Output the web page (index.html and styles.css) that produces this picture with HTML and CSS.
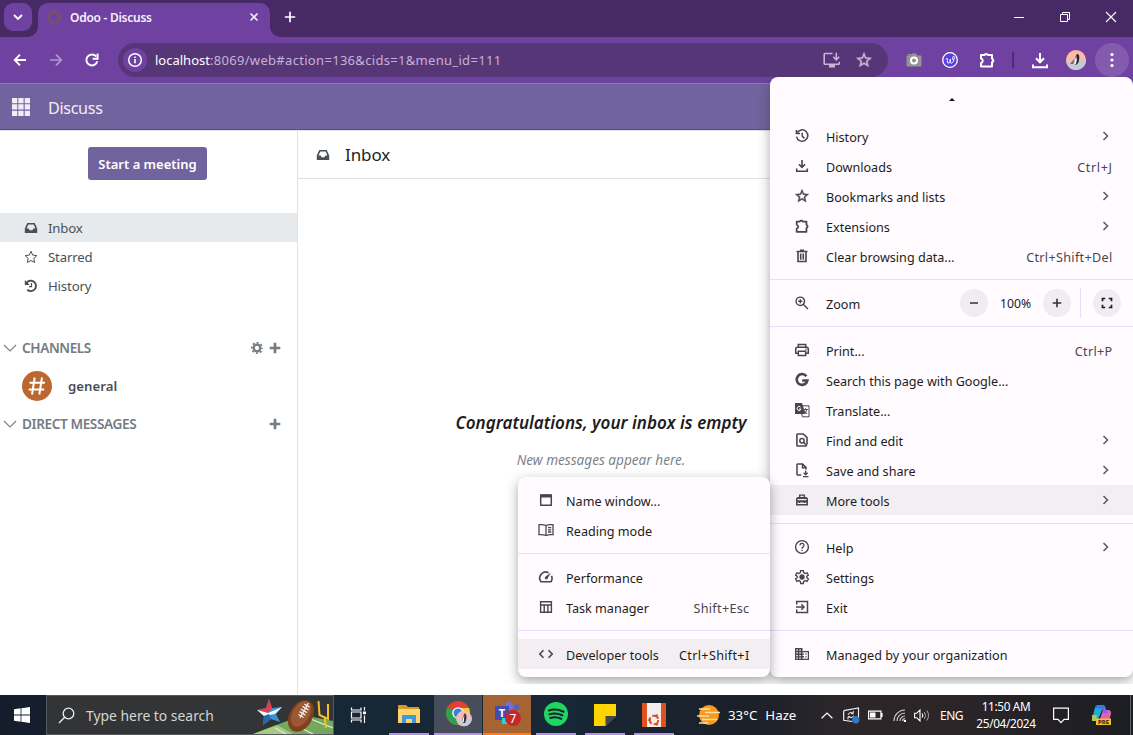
FILE: index.html
```html
<!DOCTYPE html>
<html lang="en">
<head>
<meta charset="utf-8">
<title>Odoo - Discuss</title>
<link rel="stylesheet" href="styles.css">
</head>
<body>
<svg class="defs" width="0" height="0">
  <symbol id="history" viewBox="0 0 16 16"><path d="M3 5A5.700 5.700 0 1 1 2.500 8.600M2.400 2v3.500h3.700M8.200 4.800v3.400l2.300 2.200" fill="none" stroke="currentColor" stroke-width="1.500"/></symbol>
  <symbol id="download" viewBox="0 0 16 16"><path d="M8 2v7.300M5 6.400l3 3 3-3M2.700 10.500v2.700h10.600v-2.700" fill="none" stroke="currentColor" stroke-width="1.600"/></symbol>
  <symbol id="star" viewBox="0 0 24 24"><path fill="currentColor" stroke="currentColor" stroke-width=".7" d="M22 9.240l-7.190-.620L12 2 9.190 8.630 2 9.240l5.460 4.730L5.820 21 12 17.270 18.180 21l-1.630-7.030L22 9.240zM12 15.400l-3.760 2.270 1-4.280-3.320-2.880 4.380-.380L12 6.100l1.710 4.040 4.380.380-3.320 2.880 1 4.280L12 15.400z"/></symbol>
  <symbol id="puzzle" viewBox="0 0 18 18"><path d="M3 4h3.400a2 1.800 0 0 1 3.600 0h4v3.700a1.900 1.900 0 0 1 0 3.600V15.500H3v-3.600a2.200 2.200 0 0 0 0-4.300z" fill="none" stroke="currentColor" stroke-width="2" stroke-linejoin="round"/></symbol>
  <symbol id="trash" viewBox="0 0 16 16"><path d="M2.500 3.500h11M6 2.300h4M4 4v9.500h8V4M6.700 5.500v6.300M9.300 5.500v6.300" fill="none" stroke="currentColor" stroke-width="1.600"/></symbol>
  <symbol id="zoomin" viewBox="0 0 16 16"><path d="M10.500 6.300a4.200 4.200 0 1 1-8.400 0 4.200 4.200 0 0 1 8.400 0zM9.400 9.400l4.600 4.600M6.300 4.300v4M4.300 6.300h4" fill="none" stroke="currentColor" stroke-width="1.400"/></symbol>
  <symbol id="print" viewBox="0 0 16 16"><path d="M4.300 5V2.500h7.400V5M4 11.300H1.700V7.200Q1.700 5.300 3.500 5.300h9Q14.300 5.300 14.300 7.200v4.100H12M4.300 9.200h7.400v4.300H4.300z" fill="none" stroke="currentColor" stroke-width="1.500"/><circle cx="12" cy="7.300" r=".8" fill="currentColor"/></symbol>
  <symbol id="google" viewBox="0 0 16 16"><path d="M12.400 4.200A5.400 5.400 0 1 0 13.400 8.500H8.200" fill="none" stroke="currentColor" stroke-width="2.600"/></symbol>
  <symbol id="translate" viewBox="0 0 16 16"><path d="M1 1h7l3.500 11H1z" fill="currentColor"/><path d="M7.500 3.800H15v11H8.500L7.700 12M9.300 7.500h4.500M11.500 6.300v1.200M12.800 7.500q-.6 2.700-2.600 4M10.500 9l2.700 3" fill="none" stroke="currentColor" stroke-width="1"/><path d="M6.600 5.200A2 2 0 1 0 7 7H5" fill="none" stroke="#fffbff" stroke-width="1"/></symbol>
  <symbol id="find" viewBox="0 0 16 16"><path d="M12.500 14H3.500Q2.900 14 2.900 13.300V2.700Q2.900 2 3.500 2H9.300L13 5.700V12.500" fill="none" stroke="currentColor" stroke-width="1.600"/><circle cx="8" cy="8.800" r="2.200" fill="none" stroke="currentColor" stroke-width="1.500"/><path d="M9.500 10.300l3.500 3.500" stroke="currentColor" stroke-width="1.500"/></symbol>
  <symbol id="save" viewBox="0 0 16 16"><path d="M7.300 13H3.600Q3 13 3 12.300V2.700Q3 2 3.600 2h5L12 5.400V7.500M8.500 2v3.700H12" fill="none" stroke="currentColor" stroke-width="1.500"/><path d="M11.700 8.500v4M9.700 10.700l2 2 2-2M9 14.700h5.500" fill="none" stroke="currentColor" stroke-width="1.300"/></symbol>
  <symbol id="toolbox" viewBox="0 0 16 16"><path fill="currentColor" fill-rule="evenodd" d="M5 5V2.500h6V5h1.500L14 6.500V13.500H2V6.500L3.500 5zM6.400 3.800V5h3.200V3.800zM3.500 7v1.200h9V7zM3.500 10.500v1.500h9v-1.500h-1.200v.5H10v-.5H6v.5H4.700v-.5z"/></symbol>
  <symbol id="help" viewBox="0 0 16 16"><circle cx="8" cy="8" r="6.400" fill="none" stroke="currentColor" stroke-width="1.400"/><path d="M6 6.400a2 2 0 1 1 3.200 1.500Q8 8.600 8 9.700M8 10.700v1.300" fill="none" stroke="currentColor" stroke-width="1.300"/></symbol>
  <symbol id="settings" viewBox="0 0 24 24"><path d="M10 2.500h4l.5 3 2.200 1.300 2.900-1.100 2 3.500-2.400 1.900v2l2.400 1.900-2 3.500-2.900-1.100-2.200 1.300-.5 3h-4l-.5-3-2.200-1.300-2.900 1.100-2-3.500 2.400-1.900v-2L2.400 9.200l2-3.500 2.900 1.100 2.200-1.300z" fill="none" stroke="currentColor" stroke-width="2"/><circle cx="12" cy="12" r="4" fill="currentColor"/></symbol>
  <symbol id="exit" viewBox="0 0 16 16"><path d="M2.700 5.500V2.500h10.800v11H2.700v-3M2 8h8M7.300 5.200 10 8l-2.700 2.800" fill="none" stroke="currentColor" stroke-width="1.500"/></symbol>
  <symbol id="building" viewBox="0 0 16 16"><path fill="currentColor" fill-rule="evenodd" d="M1 2h7.500v3H15v9H1zM2.300 3.500v1.300h1.500V3.500zM5.300 3.500v1.300h1.500V3.500zM2.300 6.200v1.300h1.500V6.200zM5.300 6.200v1.300h1.500V6.200zM2.300 8.900v1.300h1.500V8.900zM5.300 8.900v1.300h1.500V8.900zM2.300 11.500v1.300h1.500v-1.300zM5.300 11.500v1.300h1.500v-1.300zM8.500 6.300v1.200H10v1.300H8.500v1.300H10v1.300H8.500v1.400h5.300V6.300zM11.300 7.500h1.300v1.300h-1.300zM11.300 10.200h1.300v1.300h-1.300z"/></symbol>
  <symbol id="window" viewBox="0 0 16 16"><path d="M2.700 3h10.600v10.200H2.700z" fill="none" stroke="currentColor" stroke-width="1.500" stroke-linejoin="round"/><path d="M2.500 2.500h11v3h-11z" fill="currentColor"/></symbol>
  <symbol id="book" viewBox="0 0 16 16"><path d="M8 3.500Q5 2.200 1 2.700v10Q5 12.300 8 13.500 11 12.300 15 12.700v-10Q11 2.200 8 3.500zv10M10 5.700h3.200M10 7.800h3.200M10 10h3.200" fill="none" stroke="currentColor" stroke-width="1.300"/></symbol>
  <symbol id="speed" viewBox="0 0 16 16"><path d="M10.500 3.700A6 6 0 0 0 3 12.700H13a6 6 0 0 0 .5-5.800" fill="none" stroke="currentColor" stroke-width="1.600"/><path d="M13 3.500 9.300 10Q8 11 7 9.800 6.300 8.600 7.400 7.700z" fill="currentColor"/></symbol>
  <symbol id="table" viewBox="0 0 16 16"><path d="M2.600 2.700h10.800v10.600H2.600zM2.600 6h10.800M6.200 6v7.300M9.900 6v7.300" fill="none" stroke="currentColor" stroke-width="1.400"/></symbol>
  <symbol id="code" viewBox="0 0 16 16"><path d="M5.500 4.300 1.800 8l3.700 3.700M10.500 4.300 14.200 8l-3.700 3.700" fill="none" stroke="currentColor" stroke-width="1.600"/></symbol>
  <symbol id="inbox" viewBox="0 0 14 14"><path fill="currentColor" fill-rule="evenodd" d="M3.300 2h7.400L13.200 7.500V12H.8V7.500zM4.300 3.600 2.600 7.600H4.700L5.500 9.300h3L9.300 7.600h2.100L9.700 3.600z"/></symbol>
  <symbol id="chev" viewBox="0 0 8 10"><path d="M1.500 1 5.500 5l-4 4" fill="none" stroke="#5a575e" stroke-width="1.500"/></symbol>
  <symbol id="down" viewBox="0 0 14 8"><path d="M1 1l6 6 6-6" fill="none" stroke="#7b838b" stroke-width="1.200"/></symbol>
  <symbol id="plus" viewBox="0 0 12 12"><path d="M6 .7v10.600M.7 6h10.600" stroke="#737b83" stroke-width="2.700"/></symbol>
</svg>

<header class="tabstrip">
  <div class="tab-search"><svg width="12" height="8" viewBox="0 0 12 8"><path d="M2 2l4 4 4-4" fill="none" stroke="#fff" stroke-width="1.900"/></svg></div>
  <div class="tab">
    <span class="favicon"></span>
    <span class="tab-title">Odoo - Discuss</span>
    <svg width="10" height="10" viewBox="0 0 10 10"><path d="M1.500 1.500l7 7M8.500 1.500l-7 7" stroke="#f3eafa" stroke-width="1.600"/></svg>
  </div>
  <svg class="new-tab" width="12" height="12" viewBox="0 0 12 12"><path d="M6 .8v10.400M.8 6h10.400" stroke="#fff" stroke-width="1.700"/></svg>
  <div class="window-buttons">
    <svg width="10" height="12" viewBox="0 0 10 12"><path d="M0 6.500h10" stroke="#fff"/></svg>
    <svg width="12" height="12" viewBox="0 0 12 12"><path d="M1.500 3.500h7v7h-7zM3.500 3.500v-2h7v7h-2" fill="none" stroke="#fff"/></svg>
    <svg width="12" height="12" viewBox="0 0 12 12"><path d="M1 1l10 10M11 1 1 11" stroke="#fff" stroke-width="1.100"/></svg>
  </div>
</header>

<div class="toolbar">
  <div class="nav-buttons">
    <svg width="14" height="14" viewBox="0 0 14 14"><path d="M13 7H2M7 1.600 1.700 7 7 12.400" fill="none" stroke="#fff" stroke-width="1.900"/></svg>
    <svg class="dim" width="14" height="14" viewBox="0 0 14 14"><path d="M1 7H12M7 1.600 12.300 7 7 12.400" fill="none" stroke="#fff" stroke-width="1.700"/></svg>
    <svg width="14" height="14" viewBox="0 0 14 14"><path d="M12.300 8.200A5.500 5.500 0 1 1 11.200 3.500M12.600.6v5.200H7.700" fill="none" stroke="#fff" stroke-width="1.900"/></svg>
  </div>
  <div class="omnibox">
    <span class="info"><svg width="16" height="16" viewBox="0 0 16 16"><circle cx="8" cy="8" r="6.300" fill="none" stroke="#fff" stroke-width="1.500"/><path d="M8 7v4.200M8 4.500v1.600" stroke="#fff" stroke-width="1.600"/></svg></span>
    <span class="url"><b>localhost</b>:8069/web#action=136&amp;cids=1&amp;menu_id=111</span>
    <svg class="install" width="18" height="16" viewBox="0 0 18 16"><path d="M9.500 1.500H2Q1.200 1.500 1.200 2.300v9.200q0 .8.800.8H15.500q.8 0 .8-.8V9.800M13.300.8v6.500M10.300 4.800l3 3 3-3" fill="none" stroke="#c9b4d6" stroke-width="1.600"/><path d="M6 13h6v2.500H6z" fill="#c9b4d6"/></svg>
    <svg class="bookmark" width="18" height="18"><use href="#star"/></svg>
  </div>
  <div class="extensions">
    <svg width="16" height="16" viewBox="0 0 16 16"><path d="M2 2h3v1.300H2zM1.500 3.500h3.200L6 1.500h4l1.300 2h3.200Q15.500 3.500 15.500 4.500v9q0 1-1 1h-13q-1 0-1-1v-9Q.5 3.500 1.500 3.500z" fill="#949494"/><circle cx="8" cy="8.500" r="3" fill="#8d8d8d" stroke="#fff" stroke-width="2"/></svg>
    <svg width="16" height="16" viewBox="0 0 16 16"><circle cx="8" cy="8" r="7.300" fill="#5a3fe0" stroke="#fff" stroke-width="1.300"/><path d="M3.800 7.600q1.500-2.600 1.700-.4c.1 1.600-.8 4 .8 4 1.500 0 2-3 2-4-.2 3-.2 4 1.100 4 2 0 3.900-6.600 2.400-6.900-1.500-.1-1.700 3.700-.2 4.200" fill="none" stroke="#fff"/></svg>
    <svg width="18" height="18" class="white"><use href="#puzzle"/></svg>
    <span class="bar"></span>
    <svg width="16" height="17" viewBox="0 0 16 17"><path d="M8 1v9M4 6.300l4 4 4-4M1 12.500v2.700h14v-2.700" fill="none" stroke="#fff" stroke-width="2"/></svg>
    <svg class="avatar" width="20" height="20" viewBox="0 0 20 20"><circle cx="10" cy="10" r="10" fill="#ffb9a6"/><path d="M0 11.500q9 1 20-3a10 10 0 0 1-20 3z" fill="#c5c8d5"/><path d="M11 4q2.500 0 2.300 4 0 4-2.300 6.500H8.500Q8 8 11 4z" fill="#272735"/><path d="M10.300 6Q8 10 8 14.500L10 14Q11.500 9 10.300 6z" fill="#f2eeee"/><path d="M4 14l4-5-.5 5z" fill="#716878"/></svg>
    <span class="more"><svg width="4" height="16" viewBox="0 0 4 16" fill="#fff"><circle cx="2" cy="2.500" r="1.600"/><circle cx="2" cy="8" r="1.600"/><circle cx="2" cy="13.500" r="1.600"/></svg></span>
  </div>
</div>

<nav class="navbar">
  <svg width="18" height="18" viewBox="0 0 18 18" fill="#f1edf6"><path d="M0 0h5.300v5.300H0zM6.300 0h5.300v5.300H6.300zM12.700 0H18v5.300h-5.300zM0 6.300h5.300v5.300H0zM6.300 6.300h5.300v5.300H6.300zM12.700 6.300H18v5.300h-5.300zM0 12.700h5.300V18H0zM6.300 12.700h5.300V18H6.300zM12.700 12.700H18V18h-5.300z"/></svg>
  <span>Discuss</span>
</nav>

<main class="discuss">
  <aside class="sidebar">
    <button class="meeting">Start a meeting</button>
    <div class="mailbox active"><svg width="14" height="14"><use href="#inbox"/></svg>Inbox</div>
    <div class="mailbox"><svg width="14" height="14" viewBox="0 0 14 14"><path d="M7 1.300l1.700 3.800 4.200.5-3.100 2.800.8 4.100L7 10.500l-3.600 2 .8-4.100L1.100 5.600l4.200-.5z" fill="none" stroke="currentColor" stroke-width="1"/></svg>Starred</div>
    <div class="mailbox"><svg width="14" height="14" viewBox="0 0 14 14"><path d="M2.500 4A5.200 5.200 0 1 1 3.300 10.800" fill="none" stroke="currentColor" stroke-width="1.900"/><path d="M.8 1v5h5z" fill="currentColor"/><path d="M7.500 4v3.700H5" fill="none" stroke="currentColor" stroke-width="1.200"/></svg>History</div>
    <div class="category first"><svg width="14" height="8"><use href="#down"/></svg><span>CHANNELS</span>
      <svg width="12" height="12" viewBox="0 0 12 12"><circle cx="6" cy="6" r="3.300" fill="none" stroke="#737b83" stroke-width="2.300"/><circle cx="6" cy="6" r="5.200" fill="none" stroke="#737b83" stroke-width="1.700" stroke-dasharray="2 2.084" stroke-dashoffset="1"/></svg>
      <svg width="12" height="12"><use href="#plus"/></svg></div>
    <div class="channel"><svg width="30" height="30" viewBox="0 0 30 30"><circle cx="15" cy="15" r="15" fill="#ba6830"/><path d="M12.700 6.500 10 23.500M20 6.500l-2.700 17M7.500 11.700h15.500M6.700 18.500h15.500" stroke="#fff" stroke-width="2"/></svg>general</div>
    <div class="category"><svg width="14" height="8"><use href="#down"/></svg><span>DIRECT MESSAGES</span><svg width="12" height="12"><use href="#plus"/></svg></div>
  </aside>
  <section class="thread">
    <div class="thread-head"><svg width="14" height="14"><use href="#inbox"/></svg><span>Inbox</span></div>
    <div class="empty"><p class="congrats">Congratulations, your inbox is empty</p><p class="hint">New messages appear here.</p></div>
  </section>
</main>

<div class="menus">
  <div class="menu main-menu">
    <div class="scroll-up"></div>
    <div class="item"><svg><use href="#history"/></svg><span>History</span><svg class="chev"><use href="#chev"/></svg></div>
    <div class="item"><svg><use href="#download"/></svg><span>Downloads</span><kbd class="short">Ctrl+J</kbd></div>
    <div class="item"><svg><use href="#star"/></svg><span>Bookmarks and lists</span><svg class="chev"><use href="#chev"/></svg></div>
    <div class="item"><svg><use href="#puzzle"/></svg><span>Extensions</span><svg class="chev"><use href="#chev"/></svg></div>
    <div class="item"><svg><use href="#trash"/></svg><span>Clear browsing data...</span><kbd>Ctrl+Shift+Del</kbd></div>
    <hr>
    <div class="item zoom"><svg><use href="#zoomin"/></svg><span>Zoom</span>
      <i class="round"><svg viewBox="0 0 16 16"><path d="M4 8h8" stroke="#333036" stroke-width="1.500"/></svg></i>
      <em>100%</em>
      <i class="round"><svg viewBox="0 0 16 16"><path d="M3.700 8h8.600M8 3.700v8.600" stroke="#333036" stroke-width="1.600"/></svg></i>
      <b class="split"></b>
      <i class="round"><svg viewBox="0 0 16 16"><path d="M3.500 6.200V3.500h2.700M9.800 3.500h2.700v2.700M12.500 9.800v2.700H9.800M6.200 12.500H3.500V9.800" fill="none" stroke="#1b1a1d" stroke-width="1.700"/></svg></i>
    </div>
    <hr>
    <div class="item"><svg><use href="#print"/></svg><span>Print...</span><kbd>Ctrl+P</kbd></div>
    <div class="item"><svg><use href="#google"/></svg><span>Search this page with Google...</span></div>
    <div class="item"><svg><use href="#translate"/></svg><span>Translate...</span></div>
    <div class="item"><svg><use href="#find"/></svg><span>Find and edit</span><svg class="chev"><use href="#chev"/></svg></div>
    <div class="item"><svg><use href="#save"/></svg><span>Save and share</span><svg class="chev"><use href="#chev"/></svg></div>
    <div class="item hover"><svg><use href="#toolbox"/></svg><span>More tools</span><svg class="chev"><use href="#chev"/></svg></div>
    <hr>
    <div class="item"><svg><use href="#help"/></svg><span>Help</span><svg class="chev"><use href="#chev"/></svg></div>
    <div class="item"><svg><use href="#settings"/></svg><span>Settings</span></div>
    <div class="item"><svg><use href="#exit"/></svg><span>Exit</span></div>
    <hr>
    <div class="item"><svg><use href="#building"/></svg><span>Managed by your organization</span></div>
  </div>
  <div class="menu sub-menu">
    <div class="item"><svg><use href="#window"/></svg><span>Name window...</span></div>
    <div class="item"><svg><use href="#book"/></svg><span>Reading mode</span></div>
    <hr>
    <div class="item"><svg><use href="#speed"/></svg><span>Performance</span></div>
    <div class="item"><svg><use href="#table"/></svg><span>Task manager</span><kbd>Shift+Esc</kbd></div>
    <hr>
    <div class="item hover"><svg><use href="#code"/></svg><span>Developer tools</span><kbd class="dark">Ctrl+Shift+I</kbd></div>
  </div>
</div>

<footer class="taskbar">
  <div class="start"><svg width="16" height="16" viewBox="0 0 16 16" fill="#fff"><path d="M0 2.200 6.600 1.300V7.600H0zM7.400 1.200 16 0V7.600H7.400zM0 8.400H6.600V14.700L0 13.800zM7.400 8.400H16V16L7.400 14.800z"/></svg></div>
  <div class="search">
    <svg width="17" height="17" viewBox="0 0 17 17"><circle cx="10.500" cy="6.500" r="5.300" fill="none" stroke="#eee" stroke-width="1.300"/><path d="M6.700 10.300 1 16" stroke="#eee" stroke-width="1.300"/></svg>
    <span>Type here to search</span>
    <svg class="art" width="80" height="38" viewBox="0 0 80 38">
      <path d="M0 38 50 19 80 25V38z" fill="#74a95c"/><path d="M0 38 24 29 40 38z" fill="#a6cc84"/><path d="M22 32l11 6M36 26l24 12M50 20l30 12" stroke="#dcebd2" stroke-width="1.300"/>
      <g transform="translate(1 0)"><path d="M15 3 18 12 28 11 22 18 26 26 17 23 9 29 10 20 3 14 12 12z" fill="#3c93d2"/><path d="M15 3 18 12 14 17 3 14 12 12z" fill="#df3f4a"/><path d="M10 20 3 14 14 17 28 11 21 18z" fill="#eff5fa"/><path d="M17 23 9 29 10 20 15 18z" fill="#2769a6"/></g>
      <g transform="rotate(30 48 20)"><ellipse cx="48" cy="20" rx="11.500" ry="17" fill="#7d4023"/><ellipse cx="47" cy="18" rx="8.500" ry="14" fill="#9c5833"/><path d="M48 5v17M45 8h6M44.500 11h7M44.500 14h7M44.500 17h7M45 20h6" stroke="#f5ebe3" stroke-width="1.400"/></g>
      <path d="M65.500 5 66.500 19 75 23V8M71.500 21 73 32" fill="none" stroke="#f0bf29" stroke-width="2"/>
    </svg>
  </div>
  <div class="app view"><svg width="17" height="16" viewBox="0 0 17 16"><path d="M1.500.5v2.500h9.500V.5M1.500 15.500V13h9.500v2.500M1.500 5h9.500v6H1.500zM14.500 0v3.500M14.500 8.500V16" fill="none" stroke="#fff" stroke-width="1.200"/><path d="M13 4.500h3v2.700h-3z" fill="#fff"/></svg></div>
  <div class="app"><svg width="22" height="20" viewBox="0 0 22 20"><path d="M0 1h8l2 2h11v3H0z" fill="#d79a22"/><path d="M0 5h22v14H0z" fill="#ffd56b"/><path d="M4 19v-7q0-1 1-1h12q1 0 1 1v7h-4v-4H8v4z" fill="#3e98d9"/></svg></div>
  <div class="app chrome"><svg width="26" height="26" viewBox="0 0 26 26"><circle cx="12" cy="12" r="12" fill="#e63e32"/><path d="M1.600 6 12 12 12 24A12 12 0 0 1 1.600 6z" fill="#2fa14c"/><path d="M12 7h10.900A12 12 0 0 1 12 24l4.300-9z" fill="#fdca30"/><circle cx="12" cy="12" r="5.800" fill="#fff"/><circle cx="12" cy="12" r="4.500" fill="#3e7de4"/><circle cx="18" cy="17.500" r="7.800" fill="#f3bdb0"/><path d="M10.300 18.500q8 1 15.500-2a7.800 7.800 0 0 1-15.500 2z" fill="#c9ccd5"/><path d="M19 12q3 3 0 10h-2.500Q16 16 19 12z" fill="#35303c"/><path d="M18.300 14q-2 4-2 8l1.500-1z" fill="#fff"/></svg></div>
  <div class="app teams"><svg width="26" height="26" viewBox="0 0 26 26"><circle cx="14" cy="5" r="4" fill="#6a73d8"/><circle cx="21.500" cy="6" r="2.700" fill="#5560c2"/><path d="M10 10h15v8H10z" fill="#7078dc"/><path d="M0 5h14v14H0z" fill="#454cb1"/><path d="M7 17h7v6H7z" fill="#23d5dc"/><circle cx="18" cy="17" r="8" fill="#c5282b"/><text x="7" y="16" class="tt">T</text><text x="18" y="21.500" class="tn">7</text></svg></div>
  <div class="app"><svg width="24" height="24" viewBox="0 0 24 24"><circle cx="12" cy="12" r="12" fill="#1ed760"/><path d="M4.800 8.500Q12 6 19.500 9.700M5.500 12.300Q12 10.300 18.300 13.300M6.200 16Q12 14.300 17.200 16.800" fill="none" stroke="#16252f" stroke-width="2.100" stroke-linecap="round"/></svg></div>
  <div class="app note"><svg width="22" height="22" viewBox="0 0 22 22"><path d="M0 0h22v22H0z" fill="#fed500"/><path d="M11.500 22V12H22z" fill="#45474c"/><path d="M11.500 22 22 12v10z" fill="#172432"/></svg></div>
  <div class="app ubuntu"><svg width="24" height="24" viewBox="0 0 24 24"><path d="M0 0h24v24H0z" fill="#f2f0ef"/><path d="M0 0h5v24H0zM19 0h5v24h-5z" fill="#e1501f"/><circle cx="12" cy="17" r="4.300" fill="none" stroke="#e1501f" stroke-width="2" stroke-dasharray="7 2"/><circle cx="7.500" cy="17" r="1.400" fill="#e1501f"/><circle cx="14.700" cy="12.700" r="1.400" fill="#e1501f"/><circle cx="14.700" cy="21.300" r="1.400" fill="#e1501f"/></svg></div>
  <div class="weather"><svg width="23" height="22" viewBox="0 0 23 22"><circle cx="12" cy="11" r="10" fill="#f79a20"/><path d="M2 5h11M8 8.500h15M0 12h12M5 15.500h15M2 19h9" stroke="#ffdf9c" stroke-width="1.700"/></svg><span class="deg">33°C</span><span>Haze</span></div>
  <div class="tray">
    <svg width="12" height="7" viewBox="0 0 12 7"><path d="M.6 6.300 6 1l5.400 5.300" fill="none" stroke="#fff" stroke-width="1.200"/></svg>
    <svg class="sync" width="17" height="17" viewBox="0 0 17 17"><path d="M.7 3.700 15.500 1v10M.7 3.700v9.600L9 14.500" fill="none" stroke="#eee" stroke-width="1.200"/><path d="M5 8q.5-2.500 3-2.500l2 .7M10.300 4v2.700H8M10.700 8.500q-.5 2.700-3.500 2L5.500 9.700M5 12.500V9.700h2.500" fill="none" stroke="#eee"/><circle cx="12.700" cy="12.700" r="3.700" fill="#3278c8"/></svg>
    <svg class="battery" width="15" height="10" viewBox="0 0 15 10"><path d="M.6 1.100h12.300v7.800H.6zM14 3v4" fill="none" stroke="#fff" stroke-width="1.200"/><path d="M2 2.500h5.500v5H2z" fill="#fff"/></svg>
    <svg class="wifi" width="13" height="13" viewBox="0 0 13 13"><path d="M1 12A11 11 0 0 1 12 1M4 12a8 8 0 0 1 8-8M7 12a5 5 0 0 1 5-5M9.500 12A2.500 2.500 0 0 1 12 9.500" fill="none" stroke="#ccc" stroke-width="1.100"/><circle cx="12" cy="12" r="1.300" fill="#fff"/></svg>
    <svg class="speaker" width="17" height="13" viewBox="0 0 17 13"><path d="M.6 4.300h2L6 1v11L2.600 8.700h-2zM8 4.500q1.500 2 0 4" fill="none" stroke="#fff" stroke-width="1.100"/><path d="M10.300 3q2.500 3.500 0 7M12.800 1.500q3.500 5 0 10" fill="none" stroke="#aaa"/></svg>
    <span class="lang">ENG</span>
    <div class="clock"><span>11:50 AM</span><span>25/04/2024</span></div>
    <svg class="chat" width="16" height="17" viewBox="0 0 16 17"><path d="M.6 1.100h14.800v11.300H11L8 15.600 5 12.400H.6z" fill="none" stroke="#fff" stroke-width="1.200"/></svg>
    <svg class="copilot" width="22" height="20" viewBox="0 0 22 20"><path d="M1 14 4 2.500Q4.500 0 7 0h5q2 0 3 5h-4L7 15H3Q0 16 1 14z" fill="#22abd8"/><path d="M3.500 4Q5 .3 7 0h5q2 0 3 5h-3Q8 2 3.500 4z" fill="#3478ec"/><path d="M12 5h5q3.500 0 3 4l-1.500 5H9z" fill="#df63b4"/><path d="M12 5q2-3 3 0l2 3h-5.500z" fill="#8c5be8"/><path d="M1 10h5l-1 6H1z" fill="#a4cf54"/><path d="M5 13.500h15V20H5z" fill="#f6bf28"/><text x="12.500" y="19.200" class="pre">PRE</text></svg>
    <span class="peek"></span>
  </div>
</footer>
</body>
</html>
```
FILE: styles.css
```css
* { box-sizing: border-box; }
body {
  margin: 0; width: 1133px; height: 735px; overflow: hidden; position: relative;
  display: flex; flex-direction: column;
  font-family: "Noto Sans", "Open Sans", sans-serif; background: #fff; color: #1d1b20;
}
svg { display: block; flex: none; }
.defs { position: absolute; }
span, em, kbd { white-space: nowrap; }

/* browser tabs */
.tabstrip { height: 37px; flex: none; background: #472a65; display: flex; align-items: flex-start; padding: 3px 16px 0 4px; }
.tab-search { width: 28px; height: 28px; border-radius: 9px; background: #6f42a1; display: grid; place-items: center; }
.tab { position: relative; margin-left: 6px; width: 232px; height: 34px; background: #6f42a1; border-radius: 10px 10px 0 0; display: flex; align-items: center; padding: 0 11px 6px 9px; }
.tab::before, .tab::after { content: ""; position: absolute; bottom: 0; width: 10px; height: 10px; }
.tab::before { left: -10px; background: radial-gradient(circle at 0 0, transparent 9.5px, #6f42a1 10px); }
.tab::after { right: -10px; background: radial-gradient(circle at 100% 0, transparent 9.5px, #6f42a1 10px); }
.favicon { width: 14px; height: 14px; border: 3px solid #75506f; border-radius: 50%; margin-right: 9px; }
.tab-title { font-size: 12px; font-weight: 600; color: #f7f0fc; flex: 1; letter-spacing: -.27px; }
.new-tab { margin: 8px 0 0 14px; }
.window-buttons { margin: 8px 0 0 auto; display: flex; gap: 34px; }
.window-buttons svg:first-child { margin-right: 1px; }

/* browser toolbar */
.toolbar { height: 46px; flex: none; background: #6f42a1; display: flex; align-items: center; padding: 0 4px 0 13px; }
.nav-buttons { display: flex; gap: 22px; width: 105px; }
.dim { opacity: .45; }
.omnibox { width: 770px; height: 34px; border-radius: 17px; background: #563676; display: flex; align-items: center; padding: 0 15px 0 5px; flex: none; }
.info { width: 24px; height: 24px; border-radius: 50%; background: #6f42a1; display: grid; place-items: center; margin-right: 8px; }
.url { font-size: 13px; color: #c6b2d8; flex: 1; letter-spacing: .31px; }
.url b { font-weight: 400; color: #fff; letter-spacing: 0; }
.bookmark { color: #c9b4d6; margin-left: 14px; }
.extensions { display: flex; align-items: center; margin-left: 18px; flex: 1; }
.extensions > * { margin-right: 20px; }
.white { color: #fff; }
.extensions .bar { width: 2px; height: 16px; background: #4d2c73; margin: 0 18px 0 -4px; }
.extensions .avatar { margin: 0 9px 0 -2px; }
.extensions .more { width: 34px; height: 34px; border-radius: 50%; background: #825bae; display: grid; place-items: center; margin: 0 0 0 auto; flex: none; }

/* application bar */
.navbar { height: 47px; flex: none; background: #71639e; border-top: 1px solid #9273b8; border-bottom: 1px solid #5b4f84; display: flex; align-items: center; padding: 0 12px; gap: 18px; color: #f1edf6; font-size: 16.2px; letter-spacing: -.35px; }
.navbar span { padding-top: 3px; }

.discuss { height: 565px; flex: none; display: flex; border-top: 1px solid #dee2e6; }
.sidebar { width: 298px; border-right: 1px solid #dee2e6; display: flex; flex-direction: column; color: #495057; font-size: 13.2px; letter-spacing: -.15px; }
.meeting { width: 119px; height: 33px; margin: 16px 0 33px 88px; border: 0; border-radius: 3px; background: #71639e; color: #fff; font: 600 13px "Noto Sans", sans-serif; padding: 1px 0 0; white-space: nowrap; }
.mailbox { height: 29px; display: flex; align-items: center; gap: 10px; padding: 1px 0 0 24px; }
.mailbox.active { background: #e7eaed; }
.category { display: flex; align-items: center; height: 24px; padding: 0 16px 0 3px; gap: 5px; color: #737b83; font-size: 13.6px; font-weight: 600; letter-spacing: -.4px; }
.category span { flex: 1; padding-bottom: 2px; }
.category svg + svg { margin-left: 1px; }
.category.first { margin-top: 36px; }
.channel { height: 52px; display: flex; align-items: center; gap: 16px; padding-left: 22px; font-weight: 600; letter-spacing: .05px; }
.thread { flex: 1; display: flex; flex-direction: column; }
.thread-head { height: 48px; border-bottom: 1px solid #dee2e6; display: flex; align-items: center; gap: 15px; padding-left: 18px; font-size: 17px; letter-spacing: -.1px; color: #212529; }
.thread-head svg { color: #495057; }
.empty { width: 606px; text-align: center; margin-top: 230px; }
.empty p { margin: 0; font-style: italic; white-space: nowrap; }
.congrats { font-size: 17px; font-weight: 600; line-height: 27px; letter-spacing: .02px; }
.hint { font-size: 13.6px; line-height: 20px; color: #7d838a; padding-top: 14px; }

/* popup menus float above the page */
.menus { position: absolute; left: 498px; top: 77px; width: 635px; height: 607px; overflow: hidden; }
.menu { position: absolute; background: #fffbff; box-shadow: 0 4px 12px rgba(40,50,50,.42); border-radius: 8px; color: #1d1b20; font-size: 12.6px; }
.main-menu { left: 272px; top: 0; width: 363px; height: 600px; }
.sub-menu { left: 20px; top: 400px; width: 252px; height: 200px; padding-top: 8px; }
.scroll-up { height: 44px; padding-top: 21px; }
.scroll-up::before { content: ""; display: block; margin: 0 auto; width: 0; border: 3px solid transparent; border-top: 0; border-bottom-color: #111; }
.item { height: 30px; display: flex; align-items: center; padding: 0 20.5px 0 24px; }
.sub-menu .item { padding-left: 20px; }
.item > svg:first-child { width: 16px; height: 16px; color: #48454e; margin-right: 16px; }
.sub-menu .item > svg:first-child { margin-right: 12px; }
.item > span { flex: 1; padding-top: 2px; }
.item .chev { width: 8px; height: 10px; margin-right: 2.5px; }
.item.hover { background: #f3eef2; }
kbd { font: inherit; color: #49454e; padding-top: 2px; letter-spacing: .33px; }
kbd.short { letter-spacing: .6px; }
kbd.dark { color: #1d1b20; }
.menu hr { border: 0; margin: 8px 0; height: 1px; background: #e9dcfa; }
.item.zoom { padding-right: 12px; }
.round { width: 28px; height: 28px; border-radius: 50%; background: #f1ebf3; display: grid; place-items: center; }
.round svg { width: 16px; height: 16px; }
.zoom em { font-style: normal; font-size: 12.2px; width: 55px; text-align: center; }
.split { width: 1px; height: 30px; background: #e9dcfa; margin: 0 12px 0 9px; }

/* desktop taskbar */
.taskbar { height: 40px; flex: none; display: flex; background: linear-gradient(90deg, #151d2c 0, #172735 30%, #172735 50%, #1b2029 66%, #2b2629 74%, #2b2528 84%, #1c1d22 100%); color: #fff; }
.start { width: 46px; display: grid; place-items: center; padding-right: 2px; }
.search { width: 288px; background: #333436; border: 1px solid #55585c; display: flex; align-items: center; padding-left: 11px; gap: 11px; font-size: 13.9px; color: #d4d4d4; }
.search .art { margin-left: auto; }
.app { width: 40px; margin-right: 9px; display: grid; place-items: center; border-bottom: 2px solid #b493e5; }
.app.view { width: 48px; margin-right: 7px; border: 0; }
.app.chrome { width: 48px; background: #454e5a; margin: 0 1px 0 -4px; padding-left: 2px; }
.app.teams { width: 48px; background: #a56432; border-color: #ff7b14; margin-right: 5px; padding-left: 2px; }
.app.note { padding-top: 2px; }
.app.ubuntu { margin-right: 0; padding-top: 1px; }
.tt { font: 700 11px "Noto Sans", sans-serif; fill: #fff; text-anchor: middle; }
.tn { font: 12px "Noto Sans", sans-serif; fill: #fff; text-anchor: middle; }
.pre { font: 700 6px "Noto Sans", sans-serif; fill: #222; text-anchor: middle; }
.weather { display: flex; align-items: center; font-size: 13.3px; margin-left: 23px; width: 124px; gap: 8px; }
.tray { flex: 1; display: flex; align-items: center; font-size: 12px; }
.sync { margin-left: 10px; }
.battery { margin-left: 8px; }
.wifi { margin-left: 10px; }
.speaker { margin-left: 8px; }
.lang { margin-left: 9px; width: 24px; letter-spacing: -.5px; }
.clock { display: flex; flex-direction: column; text-align: center; width: 68px; margin-left: 8px; line-height: 17.5px; font-size: 11.8px; letter-spacing: -.35px; }
.chat { margin-left: 13px; }
.copilot { margin-left: 22px; }
.peek { width: 1px; height: 40px; background: #62656b; margin-left: 17px; }
```
